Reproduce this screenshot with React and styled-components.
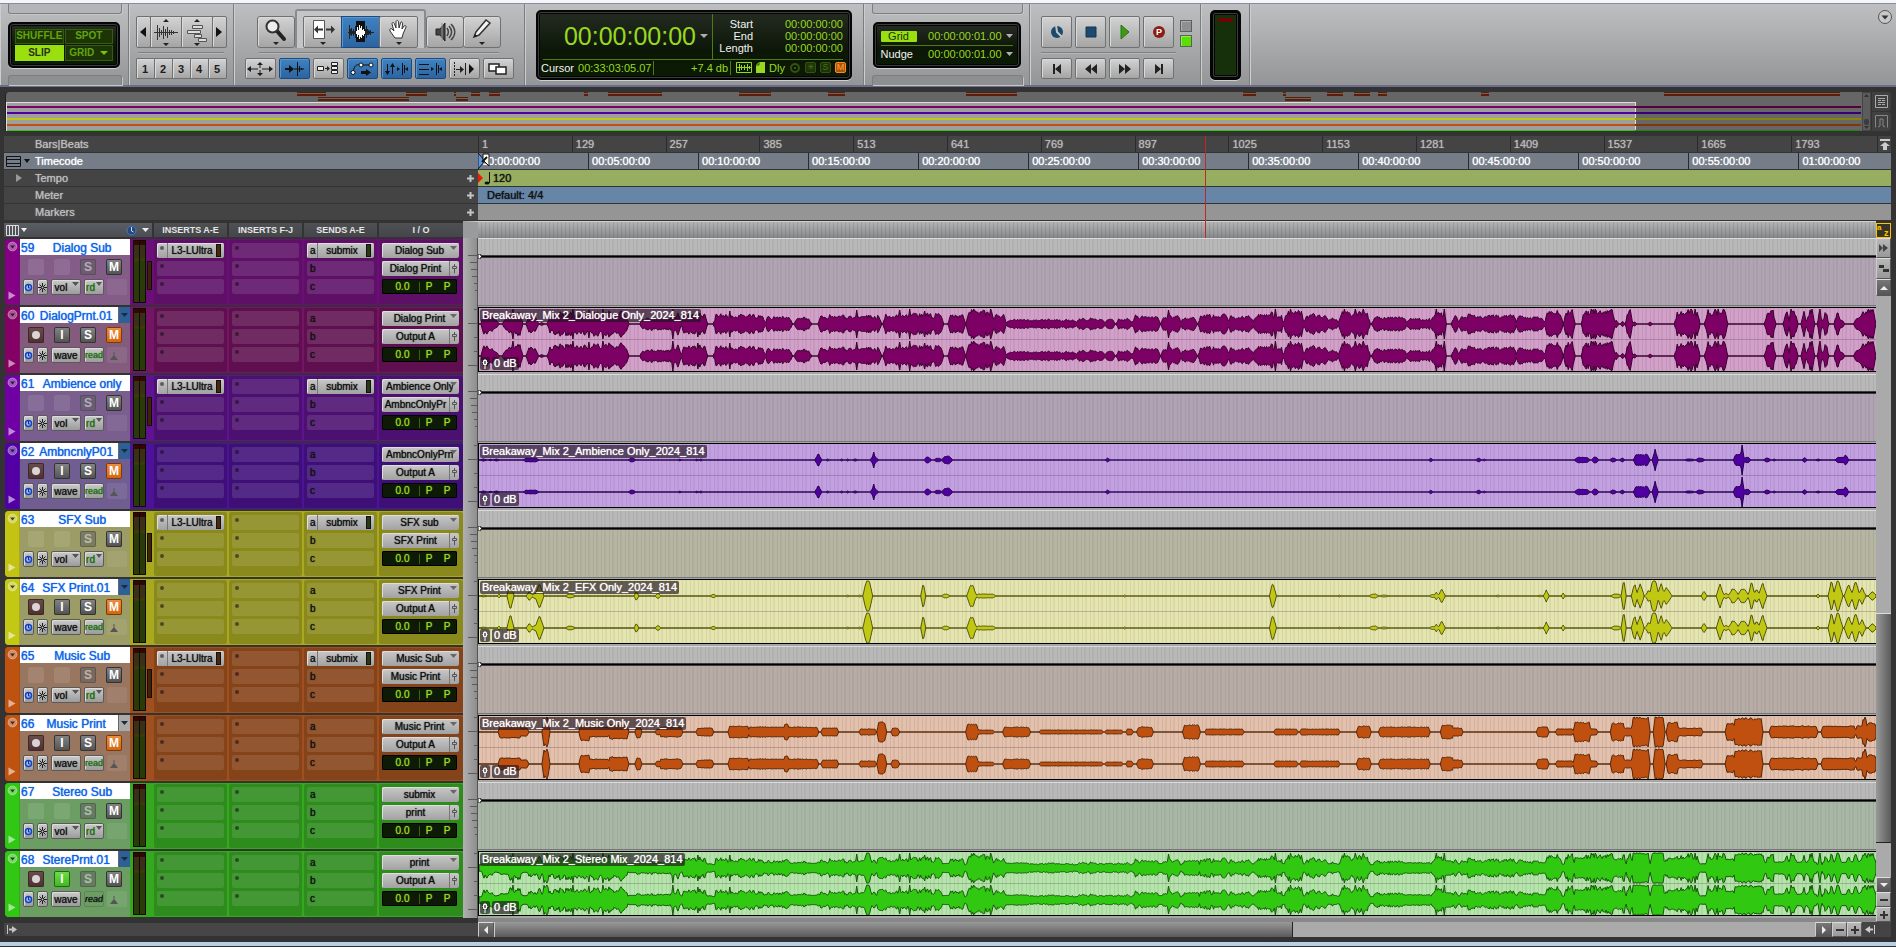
import React from 'react';
import styled, { createGlobalStyle, css } from 'styled-components';

const GlobalStyle = createGlobalStyle`
  * { box-sizing: border-box; }
  html, body { margin: 0; padding: 0; background: #303030; }
  body { font-family: "Liberation Sans", Arial, sans-serif; font-size: 11px; line-height: 12px; color: #ccc; }
  button, select { font: inherit; color: inherit; margin: 0; padding: 0; border: 0; background: none; cursor: pointer; }
  svg { display: block; flex: none; }
`;

/* ---------- data ---------- */

const DIALOG = [
  [3, 20, 14, 3], [24, 43, 6, 15], [48, 59, 9], [61, 65, 2], [69, 94, 10, 14], [94, 110, 11], [110, 149, 13], [162, 194, 7],
  [194, 202, 11], [203, 228, 11], [235, 250, 10], [250, 286, 10], [287, 313, 8], [316, 332, 7], [340, 378, 9], [378, 402, 9],
  [405, 431, 10], [431, 464, 11], [470, 486, 10], [488, 515, 15], [515, 527, 10], [528, 598, 5], [598, 626, 6], [627, 636, 5],
  [638, 653, 6], [654, 681, 9], [683, 702, 9], [702, 718, 7], [720, 750, 10], [750, 775, 8], [775, 796, 9, 13], [796, 805, 9],
  [806, 825, 14], [826, 850, 10], [850, 860, 7], [861, 891, 13], [894, 928, 8], [928, 953, 6], [953, 966, 12], [974, 980, 9],
  [981, 1038, 10], [1038, 1066, 8], [1067, 1084, 14], [1086, 1096, 15], [1104, 1136, 17], [1136, 1140, 4], [1143, 1146, 3],
  [1148, 1154, 16], [1155, 1158, 3], [1170, 1174, 2], [1197, 1221, 12, 17], [1227, 1249, 15], [1287, 1297, 16], [1306, 1311, 15],
  [1311, 1319, 16], [1324, 1328, 16], [1329, 1336, 15], [1340, 1344, 17], [1345, 1350, 15], [1357, 1362, 13], [1361, 1366, 5],
  [1376, 1385, 4, 9], [1383, 1397, 15],
];
const AMBIENCE = [
  [2, 7, 1], [10, 13, 1], [15, 20, 1], [45, 59, 2], [150, 156, 2], [200, 202, 1], [217, 219, 1], [221, 223, 1], [337, 342, 6],
  [348, 350, 1], [362, 364, 1], [368, 370, 1], [374, 379, 1], [392, 399, 3], [446, 452, 3], [456, 463, 2], [464, 473, 4],
  [627, 631, 2], [951, 954, 2], [998, 1003, 2], [1005, 1007, 1], [1097, 1111, 3], [1114, 1120, 3], [1132, 1138, 2],
  [1142, 1146, 2], [1156, 1171, 6], [1175, 1179, 11], [1207, 1216, 1], [1218, 1226, 2], [1256, 1266, 6], [1266, 1272, 3],
  [1286, 1292, 2], [1295, 1297, 1], [1325, 1328, 3], [1338, 1342, 1], [1358, 1366, 3], [1365, 1370, 5],
];
const EFX = [
  [2, 7, 1], [19, 21, 2], [29, 34, 15], [48, 53, 5], [54, 57, 3], [57, 64, 12], [87, 96, 2], [156, 159, 5], [177, 181, 3],
  [232, 237, 2], [368, 370, 1], [380, 382, 1], [385, 393, 18], [443, 446, 14], [463, 471, 2], [489, 497, 12], [497, 517, 2],
  [645, 647, 1], [792, 797, 15], [860, 862, 1], [891, 900, 2], [902, 910, 1], [952, 957, 2], [956, 960, 4], [961, 966, 8],
  [1018, 1021, 1], [1060, 1063, 1], [1066, 1070, 6], [1084, 1086, 3], [1133, 1143, 2], [1144, 1147, 18], [1154, 1159, 13],
  [1159, 1165, 14], [1167, 1173, 3, 9], [1172, 1180, 18], [1180, 1186, 13], [1185, 1193, 10, 6], [1224, 1228, 5],
  [1239, 1245, 13], [1245, 1251, 3], [1251, 1260, 7], [1260, 1270, 7], [1271, 1276, 15], [1276, 1281, 8], [1281, 1288, 13],
  [1339, 1341, 2], [1351, 1356, 16], [1356, 1364, 15], [1367, 1374, 11], [1374, 1381, 15], [1381, 1387, 9], [1391, 1398, 4],
];
const MUSIC = [
  [20, 42, 6], [41, 49, 4], [64, 70, 14], [101, 111, 9], [111, 130, 5], [130, 149, 7], [157, 162, 6], [177, 181, 3], [181, 203, 5],
  [218, 234, 4], [250, 270, 6], [270, 339, 5], [305, 310, 8], [343, 359, 4], [381, 397, 3], [399, 407, 10], [413, 420, 4],
  [488, 499, 8], [499, 515, 2], [525, 551, 5], [561, 624, 2], [627, 644, 2], [648, 654, 3], [659, 674, 5], [705, 721, 7],
  [727, 765, 3], [796, 819, 3], [822, 861, 3], [879, 892, 6], [901, 951, 5], [963, 975, 7], [975, 984, 4], [1059, 1070, 5],
  [1078, 1095, 3], [1096, 1112, 10], [1112, 1119, 3], [1133, 1146, 9], [1146, 1154, 4], [1154, 1171, 15], [1176, 1186, 16],
  [1189, 1200, 10], [1200, 1224, 4], [1248, 1256, 9], [1256, 1284, 14], [1292, 1339, 6], [1344, 1377, 6], [1378, 1384, 6],
  [1384, 1389, 13], [1389, 1398, 9],
];
const SPIKES = {
  dialog: [[34, 15], [94, 16], [110, 14], [124, 16], [194, 15], [219, 13], [251, 13], [378, 14], [421, 14], [431, 16], [446, 13], [495, 16], [505, 14], [512, 16], [690, 14], [797, 16], [812, 16], [866, 16], [877, 16], [885, 16], [958, 15], [966, 15], [1217, 16], [1240, 16]],
  ambience: [[395, 8], [1264, 16]],
  efx: [[1177, 17]],
  music: [[68, 15], [308, 8], [1170, 15], [1387, 16]],
};

const CLIP_WIDTH = 1398;

const noise = (x, seed) => {
  const v = Math.sin(x * 12.9898 + seed * 78.233) * 43758.5453;
  return v - Math.floor(v);
};

const envelope = (segments, spikes, seed, rough, taper) => {
  const out = new Array(CLIP_WIDTH + 1).fill(0);
  segments.forEach(([from, to, a, b = a]) => {
    const edge = Math.min(taper, (to - from) / 2);
    for (let x = from; x <= Math.min(to, CLIP_WIDTH); x += 1) {
      const t = (x - from) / (to - from);
      const level = a + (b - a) * t;
      const fade = Math.min(1, (x - from + 1) / (edge + 1), (to - x + 1) / (edge + 1));
      const jitter = 1.06 - rough * noise(Math.floor(x / 3), seed) * 0.6 - rough * noise(x, seed + 3);
      out[x] = Math.max(out[x], level * fade * jitter);
    }
  });
  spikes.forEach(([x, h]) => {
    out[x] = h;
    out[x - 1] = Math.max(out[x - 1], h * 0.5);
    out[x + 1] = Math.max(out[x + 1], h * 0.5);
  });
  return out;
};

const levels = {
  dialog: envelope(DIALOG, SPIKES.dialog, 1, 0.36, 2),
  ambience: envelope(AMBIENCE, SPIKES.ambience, 2, 0.2, 2),
  efx: envelope(EFX, SPIKES.efx, 3, 0.16, 3),
  music: envelope(MUSIC, SPIKES.music, 4, 0.14, 1),
};
levels.stereo = levels.dialog.map((v, x) => {
  const quiet = 3 + 2 * noise(Math.floor(x / 3), 7);
  return Math.max(v, levels.ambience[x], levels.efx[x], levels.music[x] * 1.05, quiet);
});

const wavePath = (values, mid) => {
  let top = `M0 ${mid}`;
  let bottom = '';
  values.forEach((v, x) => {
    const h = Math.min(15, v);
    top += `L${x} ${(mid - h).toFixed(1)}`;
    bottom = `L${x} ${(mid + h).toFixed(1)}` + bottom;
  });
  return `${top}${bottom}Z`;
};

const hues = {
  purple: { strip: '#850085', frame: '#6a0f78', panel: '#5d1066', slot: '#6e2977', info: '#835c88', tint: '#b1a5b3' },
  plum: { strip: '#840064', frame: '#741464', panel: '#5f0f4f', slot: '#702b62', info: '#835c7d', clip: '#d2a0c8', wave: '#7d0064', line: '#37002c' },
  violet: { strip: '#7000a4', frame: '#5f1390', panel: '#4c1170', slot: '#602a80', info: '#795e8e', tint: '#b0a3b4' },
  indigo: { strip: '#5200a6', frame: '#4c1398', panel: '#3f0f78', slot: '#532a88', info: '#705e92', clip: '#c3a0e1', wave: '#5000a0', line: '#24004c' },
  yellow: { strip: '#c3c314', frame: '#a9a920', panel: '#8a8a1c', slot: '#969634', info: '#9c9c66', tint: '#b6b6a3' },
  lime: { strip: '#c3c814', frame: '#a9a920', panel: '#8a8a1c', slot: '#969634', info: '#9c9c66', clip: '#e5e5b0', wave: '#c1c814', line: '#50520a' },
  orange: { strip: '#c05210', frame: '#a0501e', panel: '#85431a', slot: '#925631', info: '#987660', tint: '#b8aca7' },
  rust: { strip: '#c05210', frame: '#a0501e', panel: '#85431a', slot: '#925631', info: '#987660', clip: '#e3c1ac', wave: '#c05010', line: '#552506' },
  green: { strip: '#30c812', frame: '#36a820', panel: '#2d8c1c', slot: '#439835', info: '#6c9e64', tint: '#a9b8a6' },
  leaf: { strip: '#30c812', frame: '#36a820', panel: '#2d8c1c', slot: '#439835', info: '#6c9e64', clip: '#b5e5ab', wave: '#30c810', line: '#15560a' },
};

const tracks = [
  { no: 59, name: 'Dialog Sub', hue: 'purple', insert: 'L3-LUltra', send: 'submix', input: 'Dialog Sub', output: 'Dialog Print' },
  { no: 60, name: 'DialogPrnt.01', hue: 'plum', playlist: 'blue', input: 'Dialog Print', output: 'Output A', clip: 'Breakaway_Mix 2_Dialogue Only_2024_814', wave: 'dialog', muted: true },
  { no: 61, name: 'Ambience only', hue: 'violet', insert: 'L3-LUltra', send: 'submix', input: 'Ambience Only', output: 'AmbncOnlyPr' },
  { no: 62, name: 'AmbncnlyP01', hue: 'indigo', playlist: 'blue', input: 'AmbncOnlyPrn', output: 'Output A', clip: 'Breakaway_Mix 2_Ambience Only_2024_814', wave: 'ambience', muted: true },
  { no: 63, name: 'SFX Sub', hue: 'yellow', insert: 'L3-LUltra', send: 'submix', input: 'SFX sub', output: 'SFX Print' },
  { no: 64, name: 'SFX Print.01', hue: 'lime', playlist: 'blue', input: 'SFX Print', output: 'Output A', clip: 'Breakaway_Mix 2_EFX Only_2024_814', wave: 'efx', muted: true },
  { no: 65, name: 'Music Sub', hue: 'orange', insert: 'L3-LUltra', send: 'submix', input: 'Music Sub', output: 'Music Print' },
  { no: 66, name: 'Music Print', hue: 'rust', playlist: 'grey', input: 'Music Print', output: 'Output A', clip: 'Breakaway_Mix 2_Music Only_2024_814', wave: 'music', muted: true },
  { no: 67, name: 'Stereo Sub', hue: 'green', input: 'submix', output: 'print' },
  { no: 68, name: 'SterePrnt.01', hue: 'leaf', playlist: 'blue', input: 'print', output: 'Output A', clip: 'Breakaway_Mix 2_Stereo Mix_2024_814', wave: 'stereo', monitor: true },
];

/* ---------- toolbar ---------- */

const TopEdge = styled.div`height: 3px; background: #f4f5f7;`;

const Toolbar = styled.header`
  display: flex;
  height: 84px;
  border-top: 1px solid #878ba8;
  border-bottom: 2px solid #6c6c8c;
  background: linear-gradient(#bebfc0, #949597);
`;
const Section = styled.section`
  display: flex;
  flex-direction: column;
  align-items: ${p => p.$align || 'center'};
  justify-content: ${p => p.$justify || 'flex-start'};
  flex: none;
  width: ${p => p.$w}px;
  padding: ${p => p.$pad || '0'};
  border-right: 1px solid #7c7d7f;
  box-shadow: inset 1px 0 #cccdce;
`;
const LastSection = styled(Section)`
  flex: 1;
  width: auto;
  border-right: 0;
`;
const Bracket = styled.div`
  align-self: stretch;
  height: 10px;
  margin: 0 6px 0 8px;
  border: 1px solid #7d7e80;
  box-shadow: 1px 1px #c6c7c8;
  ${p => p.$top
    ? css`border-top: 0; border-radius: 0 0 3px 3px; background: #b4b5b6;`
    : css`border-bottom: 0; border-radius: 3px 3px 0 0; background: #8e8f91;`}
`;
const Lcd = styled.div`
  background: linear-gradient(#232b20, #0c1607 60%, #0a1a04);
  border: 4px solid #050505;
  outline: 1px solid #3c3d3e;
  outline-offset: -3px;
  border-radius: 5px;
  box-shadow: 0 1px #d0d0d0;
  color: #98d820;
`;
const ModeLcd = styled(Lcd)`
  display: grid;
  grid-template-columns: 1fr 1fr;
  gap: 1px;
  width: 112px;
  height: 46px;
  padding: 3px;
`;
const ModeButton = styled.button`
  display: flex;
  align-items: center;
  justify-content: center;
  gap: 6px;
  border: 1px solid #355b0e;
  background: #1d3506;
  color: #62a40c;
  font-size: 10px;
  font-weight: bold;
  line-height: 12px;
  ${p => p.$on && css`background: #9ae00f; border-color: #9ae00f; color: #2a2f20;`}
`;
const ButtonRow = styled.div`
  display: flex;
  align-items: ${p => p.$align || 'stretch'};
  gap: ${p => p.$gap || 0}px;
  height: ${p => p.$h}px;
`;
const Rule = styled.div`
  width: ${p => p.$w}px;
  height: 2px;
  margin: 4px 0;
  background: #808183;
  border-bottom: 1px solid #b5b6b7;
`;
const Key = styled.button`
  display: flex;
  align-items: center;
  justify-content: center;
  width: ${p => p.$w}px;
  height: ${p => p.$h || 32}px;
  border: 1px solid #6f7072;
  border-radius: ${p => p.$r ?? 3}px;
  box-shadow: inset 1px 1px #dadada;
  background: linear-gradient(#d3d3d3, #a5a5a5);
  color: #1c1c1c;
  font-size: 11px;
  font-weight: bold;
  ${p => p.$on && css`
    background: linear-gradient(#3f82c0, #2c64a0);
    border-color: #1c4a80;
    box-shadow: inset 1px 1px #5a96cc;
  `}
  & + & { ${p => p.$joined && css`margin-left: -1px;`} }
`;
const Raised = styled.div`
  display: flex;
  align-items: flex-end;
  height: 39px;
  padding: 0 6px;
  border: 2px solid #8a8b8d;
  border-bottom: 0;
  border-radius: 3px 3px 0 0;
  background: #c4c5c6;
`;

const CounterLcd = styled(Lcd)`
  display: grid;
  grid-template-rows: 46px 1fr;
  width: 316px;
  height: 70px;
`;
const CounterTop = styled.div`
  display: flex;
  margin: 0 5px 0 3px;
  border-bottom: 1px solid #4d7d10;
`;
const MainTime = styled.div`
  display: flex;
  align-items: center;
  justify-content: flex-end;
  gap: 4px;
  width: 170px;
  padding-right: 4px;
  border-right: 1px solid #4d7d10;
  font-size: 25px;
  line-height: 28px;
`;
const Selection = styled.dl`
  flex: 1;
  display: grid;
  grid-template-columns: 40px 1fr;
  grid-auto-rows: 12px;
  align-content: center;
  margin: 0;
  text-align: right;
  dt { color: #f2f2f2; }
  dd { margin: 0; }
`;
const CounterBottom = styled.div`
  display: flex;
  align-items: center;
  padding: 0 2px 0 1px;
  line-height: 14px;
`;
const White = styled.span`color: #f2f2f2;`;
const CursorTime = styled.span`
  margin-left: 4px;
  padding-right: 2px;
  border-right: 1px solid #4d7d10;
`;
const Gain = styled.span`
  margin-left: auto;
  padding-right: 2px;
  margin-right: 5px;
  border-right: 1px solid #4d7d10;
`;
const Lamps = styled.span`display: flex; align-items: center; gap: 4px;`;
const Lamp = styled.span`
  width: 11px;
  height: 11px;
  border: 1px solid ${p => (p.$on ? '#ff8a1c' : '#35520f')};
  border-radius: 2px;
  background: ${p => (p.$on ? '#a85408' : '#1d3209')};
  color: ${p => (p.$on ? '#ffa040' : '#48701a')};
  font-size: 9px;
  line-height: 9px;
  text-align: center;
`;
const GridLcd = styled(Lcd)`
  width: 148px;
  height: 46px;
  padding: 2px 4px;
`;
const GridRow = styled.div`
  display: flex;
  align-items: center;
  height: 17px;
  gap: 4px;
  & + & { border-top: 1px solid #4d7d10; }
  time { margin-left: auto; }
`;
const GridToggle = styled.button`
  width: 36px;
  height: 11px;
  border-radius: 1px;
  background: #98e010;
  color: #1c3008;
  line-height: 11px;
`;
const Led = styled.span`
  width: 12px;
  height: 12px;
  border: 1px solid #5c5d5e;
  background: ${p => (p.$on ? '#5ae000' : '#8f9091')};
  box-shadow: inset 1px 1px ${p => (p.$on ? '#8cf050' : '#b0b0b0')};
`;
const Leds = styled.div`display: flex; flex-direction: column; justify-content: center; gap: 3px; margin-left: 2px; padding-top: 3px;`;
const MeterLcd = styled(Lcd)`
  width: 31px;
  height: 70px;
  padding: 3px;
  border-width: 5px;
  outline-offset: -4px;
  background: #16300c;
  &::before { content: ''; display: block; height: 4px; background: #6a0606; }
`;
const CornerButton = styled.button`margin: 5px 3px 0 auto;`;

/* ---------- overview ---------- */

const Workspace = styled.main`padding: 5px 5px 5px 4px; background: #333;`;

const Universe = styled.div`display: flex; height: 39px; margin-bottom: 5px; padding-left: 1px;`;
const UniverseMap = styled.div`
  position: relative;
  flex: 1;
  overflow: hidden;
  border-left: 1px solid #222;
  border-radius: 4px 0 0 0;
  background: #666;
`;
const MapFrame = styled.div`
  position: absolute;
  left: 0;
  top: 10px;
  width: ${p => p.$share}%;
  height: 29px;
  border: 1px solid #ddd;
  border-bottom: 0;
  background: #9e9e9e;
`;
const MapClip = styled.div`
  position: absolute;
  top: ${p => p.$row * 5}px;
  height: 4px;
  background: linear-gradient(#5c1e08 0 1px, #666 1px 2px, #5c1e08 2px);
`;
const MapTrack = styled.div`
  position: absolute;
  left: 1px;
  right: 1px;
  top: ${p => p.$y}px;
  height: 2px;
  background: linear-gradient(90deg, ${p => p.$c} ${p => p.$share}%, ${p => p.$dim} ${p => p.$share}%);
`;
const UniverseScroll = styled.div`
  display: flex;
  flex-direction: column;
  justify-content: space-between;
  align-items: center;
  width: 9px;
  padding: 1px 0;
  border: 1px solid #444;
  background: #5c5c5c;
`;
const UniverseKnob = styled.i`width: 5px; height: 6px; margin: auto 0 1px; border-radius: 2px; background: #3c3c3c;`;
const UniverseButtons = styled.div`
  display: flex;
  flex-direction: column;
  gap: 1px;
  width: 20px;
  padding-left: 1px;
  button { height: 20px; display: grid; place-items: center; background: #404040; border-radius: 0 3px 3px 0; }
`;

/* ---------- rulers ---------- */

const Rulers = styled.div`position: relative; display: flex; flex-direction: column; gap: 1px; margin-bottom: 1px;`;
const RulerRow = styled.div`display: flex; height: 16px; background: ${p => p.$bg || '#444'};`;
const RulerName = styled.div`
  display: flex;
  align-items: center;
  width: 474px;
  padding-left: ${p => (p.$lead ? 2 : 31)}px;
  padding-right: 4px;
  background: ${p => p.$bg || '#444'};
  color: ${p => p.$color || '#bdbdbd'};
  text-shadow: 0 0 1px currentColor;
  > svg:last-child { margin-left: auto; }
`;
const RulerLead = styled.span`display: flex; align-items: center; gap: 3px; width: 29px; padding-left: ${p => (p.$indent ? 10 : 0)}px;`;
const RulerBody = styled.div`
  flex: 1;
  min-width: 0;
  display: flex;
  align-items: center;
  overflow: hidden;
  color: ${p => p.$color || '#111'};
  background: ${p => p.$bg || 'transparent'};
  text-shadow: 0 0 1px currentColor;
`;
const Tick = styled.span`
  flex: none;
  height: 16px;
  padding-left: 3px;
  border-left: 1px solid #2b2b2b;
  line-height: 16px;
`;
const Ticks = styled.div`display: flex; width: 100%; flex: none;`;
const ToTop = styled.button`display: grid; place-items: center; width: 14px; height: 16px; border-left: 1px solid #2b2b2b;`;
const TempoText = styled.span`padding-left: 2px;`;
const MeterText = styled.span`padding-left: 9px;`;
const Playhead = styled.i`
  position: absolute;
  top: 0;
  left: 1201px;
  width: 1px;
  height: 102px;
  background: #c22626;
  z-index: 2;
`;
const StartFlag = styled.svg`position: relative; z-index: 1; margin-right: -12px;`;

/* ---------- edit window ---------- */

const Body = styled.div`display: flex;`;
const TrackArea = styled.div`flex: 1; min-width: 0;`;
const ColumnHeads = styled.div`display: flex; height: 17px; align-items: stretch;`;
const HeadList = styled.div`
  display: grid;
  grid-template-columns: 148px 73px 73px 73px 84px;
  gap: 2px;
  width: 459px;
  padding: 2px 0 1px;
`;
const Head = styled.div`
  display: flex;
  align-items: center;
  justify-content: center;
  background: linear-gradient(#4f5052, #45464a);
  color: #e6e6e6;
  font-size: 9px;
  font-weight: bold;
`;
const HeadTools = styled(Head)`
  justify-content: flex-start;
  gap: 2px;
  padding: 0 3px 0 2px;
  background: linear-gradient(#5a5e64, #4a4d52);
  svg:nth-child(3) { margin: 0 3px 0 auto; }
`;
const stripes = css`
  background-image: repeating-linear-gradient(90deg, transparent 0 3px, rgba(0, 0, 0, 0.07) 3px 4px, transparent 4px 6px, rgba(0, 0, 0, 0.05) 6px 8px);
`;
const HeadLane = styled.div`
  flex: 1;
  border-left: 15px solid #9a9b9c;
  border-top: 1px solid #cfcfcf;
  background: repeating-linear-gradient(90deg, transparent 0 3px, rgba(0, 0, 0, 0.1) 3px 4px), linear-gradient(#b5b5b5, #858789);
`;

const Row = styled.div`display: flex; height: 68px;`;
const TrackHead = styled.div`
  display: grid;
  grid-template-columns: 14px 111px 24px 75px 75px 75px 84px;
  width: 458px;
  height: 66px;
  margin: 1px 0 1px 1px;
  border-radius: 4px 0 0 4px;
  overflow: hidden;
  background: ${p => p.$h.frame};
`;
const ColorStrip = styled.div`
  display: flex;
  flex-direction: column;
  justify-content: space-between;
  align-items: center;
  padding: 2px 0 5px;
  background: ${p => p.$h.strip};
  button { display: block; }
`;
const Info = styled.div`
  margin-left: 1px;
  background: ${p => p.$h.info};
`;
const NameRow = styled.div`display: flex; height: 16px; background: #fff; color: #0f62e6;`;
const TrackNo = styled.span`padding-left: 1px; font-size: 12px; line-height: 18px; text-shadow: 0 0 1px currentColor;`;
const TrackName = styled.button`
  flex: 1;
  min-width: 0;
  font-size: 12px;
  line-height: 18px;
  text-shadow: 0 0 1px currentColor;
  white-space: nowrap;
`;
const Playlist = styled.button`
  width: 12px;
  padding-left: 2px;
  border-left: 1px solid #666;
  background: ${p => (p.$kind === 'blue' ? '#2d6098' : '#aaa')};
  display: flex;
  align-items: center;
`;
const Pads = styled.div`display: flex; gap: 10px; padding: 4px 8px 0;`;
const Pad = styled.button`
  display: grid;
  place-items: center;
  width: 16px;
  height: 16px;
  border-radius: 2px;
  font-size: 12px;
  font-weight: bold;
  line-height: 14px;
  color: #fff;
  ${p => ({
    blank: css`background: rgba(255, 255, 255, 0.1);`,
    rec: css`background: linear-gradient(#6a4e4e, #4c2f2f); box-shadow: inset 0 0 0 1px #402828;`,
    grey: css`background: linear-gradient(#868686, #505050); box-shadow: inset 0 0 0 1px #333;`,
    dim: css`background: rgba(90, 90, 90, 0.5); box-shadow: inset 0 0 0 1px rgba(60, 60, 60, 0.4); color: rgba(255, 255, 255, 0.5);`,
    mute: css`background: linear-gradient(#f09040, #cf6410); box-shadow: inset 0 0 0 1px #7c3a08;`,
    input: css`background: linear-gradient(#70e048, #40b420); box-shadow: inset 0 0 0 1px #1f6a10;`,
  })[p.$kind]}
`;
const Modes = styled.div`display: flex; gap: 3px; padding: 4px 3px 0;`;
const chip = css`
  height: 16px;
  border-radius: 2px;
  border: 1px solid #5a5a5a;
  background: linear-gradient(#cacaca, #9c9c9c);
  box-shadow: inset 1px 1px #dcdcdc;
  color: #111;
`;
const SmallKey = styled.button`
  ${chip}
  display: grid;
  place-items: center;
  width: 11px;
`;
const ModeSelect = styled.select`
  ${chip}
  appearance: none;
  width: ${p => p.$w}px;
  padding: 0 ${p => (p.$arrow ? Math.round(p.$w / 3) : 0)}px 0 0;
  text-align: center;
  text-align-last: center;
  font-size: 10px;
  line-height: 13px;
  text-shadow: 0 0 1px currentColor;
  color: ${p => p.$color || '#111'};
  ${p => p.$tight && css`font-size: 9px;`}
  ${p => p.$flat && css`background: transparent; border-color: rgba(0, 0, 0, 0.15); box-shadow: none; font-style: italic;`}
`;
const SelectWrap = styled.span`
  position: relative;
  display: flex;
  svg { position: absolute; right: 2px; top: 3px; pointer-events: none; }
`;
const BlankMode = styled.span`
  display: grid;
  place-items: end start;
  width: 22px;
  height: 16px;
  padding: 3px;
  border-radius: 2px;
  background: rgba(255, 255, 255, 0.08);
`;
const MeterCell = styled.div`display: flex; align-items: flex-start; gap: 1px; padding: 1px 0 0 3px;`;
const TrackMeter = styled.div`
  width: 13px;
  height: 63px;
  border: 1px solid #0c0c04;
  background:
    linear-gradient(90deg, transparent 5px, #0c0c04 5px 6px, transparent 6px),
    linear-gradient(#3a0404 0 4px, #3a3018 4px 17px, #3c3c06 17px 20px, #2a3a08 20px);
`;
const SideMeter = styled.div`width: 5px; height: 29px; margin-top: 21px; border: 1px solid #140c04; background: #3d2408;`;
const Slots = styled.div`
  display: flex;
  flex-direction: column;
  gap: 3px;
  height: 64px;
  margin: 1px 2px 1px 0;
  padding: 3px 3px 0;
  border-radius: 2px;
  background: ${p => p.$h.panel};
  color: #111;
`;
const IoSlots = styled(Slots)`margin-right: 0; padding-right: 4px;`;
const Slot = styled.button`
  display: flex;
  align-items: center;
  height: 15px;
  border-radius: 2px;
  background: ${p => p.$h.slot};
  font-size: 10px;
  text-align: left;
  ${p => p.$on && css`background: linear-gradient(#c8c8c8, #a2a2a2); box-shadow: inset 1px 1px #dedede;`}
`;
const SlotKey = styled.span`
  width: 11px;
  padding-left: 3px;
  align-self: stretch;
  line-height: 15px;
  text-shadow: 0 0 1px currentColor;
  border-right: ${p => (p.$on ? '1px solid #777' : '0')};
`;
const Dot = styled.i`display: block; width: 4px; height: 4px; margin-top: 3px; border-radius: 2px; background: rgba(20, 10, 20, 0.55);`;
const SlotText = styled.span`flex: 1; text-align: center; text-shadow: 0 0 1px currentColor;`;
const SlotMeter = styled.i`width: 5px; height: 13px; margin-right: 3px; border: 1px solid #111; background: ${p => p.$c};`;
const IoSelect = styled.select`
  appearance: none;
  width: 77px;
  height: 15px;
  padding: 0 6px 0 4px;
  border-radius: 2px;
  background: linear-gradient(#c8c8c8, #a2a2a2);
  box-shadow: inset 1px 1px #dedede;
  color: #111;
  font-size: 10px;
  line-height: 13px;
  text-align: center;
  text-align-last: center;
  text-shadow: 0 0 1px currentColor;
`;
const IoOutput = styled.span`
  display: flex;
  ${IoSelect} { width: 67px; padding: 0; border-radius: 2px 0 0 2px; }
`;
const FaderKey = styled.button`
  display: grid;
  place-items: center;
  width: 10px;
  height: 15px;
  border-left: 1px solid #777;
  border-radius: 0 2px 2px 0;
  background: linear-gradient(#c8c8c8, #a2a2a2);
`;
const VolPan = styled.div`
  display: flex;
  align-items: center;
  width: 75px;
  height: 15px;
  border-radius: 2px;
  background: #0d1a06;
  box-shadow: inset 0 0 0 1px #000;
  color: #98d820;
  font-size: 10px;
  text-shadow: 0 0 1px currentColor;
  span { width: 18px; text-align: center; }
  span:first-child { width: 38px; border-right: 1px solid #3c6010; padding-left: 4px; line-height: 10px; }
`;

const Scale = styled.div`
  width: 15px;
  background: linear-gradient(90deg, #b0b0b0, #8e8e8e);
  border-right: 1px solid #555;
  display: flex;
  flex-direction: column;
  align-items: flex-end;
  padding-top: ${p => (p.$clip ? 3 : 17)}px;
  gap: ${p => (p.$clip ? 13 : 6)}px;
`;
const ScaleMark = styled.i`width: ${p => p.$w}px; height: 1px; background: #5a5a5a;`;
const AuxLane = styled.div`
  flex: 1;
  min-width: 0;
  height: 68px;
  border-top: 1px solid #dadada;
  border-bottom: 1px solid #777;
  background-color: #b9b9b9;
  ${stripes}
`;
const AutoFill = styled.div`
  height: 49px;
  margin-top: 17px;
  border-top: 1px solid #000;
  box-shadow: 0 -1px #3c3c3c, inset 0 1px #3c3c3c;
  background-color: ${p => p.$c};
  ${stripes}
`;
const AutoPoint = styled.svg`position: relative; top: -3px;`;
const ClipLane = styled.div`
  flex: 1;
  min-width: 0;
  height: 68px;
  padding: 1px 0 2px;
  background: #a6a6a6;
`;
const Clip = styled.div`
  position: relative;
  height: 65px;
  border: 1px solid #000;
  border-right: 0;
  background-color: ${p => p.$c};
  ${stripes}
`;
const Wave = styled.svg`width: 100%; height: 63px;`;
const ClipName = styled.span`
  position: absolute;
  left: 1px;
  top: 1px;
  padding: 0 2px;
  border-radius: 2px;
  background: rgba(30, 20, 30, 0.66);
  color: #fff;
  line-height: 13px;
  text-shadow: 0 0 1px currentColor;
`;
const ClipGain = styled.span`
  position: absolute;
  left: 1px;
  bottom: 1px;
  display: flex;
  gap: 2px;
  color: #fff;
  line-height: 13px;
  text-shadow: 0 0 1px currentColor;
  > * { padding: 0 2px; border-radius: 2px; background: rgba(30, 20, 30, 0.66); }
  svg { padding: 0; }
`;
const BottomGap = styled.div`height: 4px; margin-left: 474px; background: #888;`;

const ScrollColumn = styled.div`
  display: flex;
  flex-direction: column;
  width: 15px;
  margin-top: 2px;
  background: #aaa;
`;
const ToolKey = styled.button`
  height: ${p => p.$h || 15}px;
  width: ${p => p.$w || 15}px;
  display: grid;
  place-items: center;
  border: 1px solid #555;
  border-top-color: #ddd;
  border-left-color: #ccc;
  background: ${p => (p.$dark ? 'linear-gradient(#777, #555)' : 'linear-gradient(#b8b8b8, #999)')};
`;
const AzKey = styled.button`
  display: grid;
  place-items: center;
  width: 15px;
  height: 15px;
  border: 1px solid #ffc400;
  background: #3a3426;
`;
const VTrack = styled.div`flex: 1; display: flex; flex-direction: column;`;
const VSpace = styled.div`flex: ${p => p.$f};`;
const VThumb = styled.div`
  flex: 229;
  border-top: 1px solid #ddd;
  border-bottom: 1px solid #222;
  background: linear-gradient(90deg, #999, #5a5a5a);
`;

const BottomBar = styled.div`display: flex; height: 15px;`;
const BottomLeft = styled.div`
  display: flex;
  align-items: center;
  width: 474px;
  padding-left: 3px;
  margin: 1px 0;
  background: #464646;
  border-radius: 0 0 0 3px;
`;
const HScroll = styled.div`flex: 1; display: flex; background: #aaa;`;
const HTrack = styled.div`flex: 1; display: flex;`;
const HThumb = styled.div`width: 60.5%; border-left: 1px solid #ccc; border-right: 1px solid #222; background: linear-gradient(#999, #5a5a5a);`;
const BottomEnd = styled.div`display: flex; align-items: center; justify-content: flex-start; width: 29px; padding-left: 3px; background: #444;`;
const DesktopEdge = styled.div`height: 4px; background: #b8cfea;`;

/* ---------- icons ---------- */

const Down = ({ c = '#222', w = 8, h = 4 }) => (
  <svg width={w} height={h} viewBox="0 0 8 4" preserveAspectRatio="none"><path d="M0 0H8L4 4Z" fill={c} /></svg>
);
const Glyph = ({ w = 20, h = 20, children }) => (
  <svg width={w} height={h} viewBox={`0 0 ${w} ${h}`}>{children}</svg>
);
const carets = <path d="M9 3l3-3 3 3zM9 24h6l-3 3z" fill="#222" />;

const icons = {
  left: <Glyph w={6} h={10}><path d="M6 0v10L0 5z" fill="#111" /></Glyph>,
  right: <Glyph w={6} h={10}><path d="M0 0v10l6-5z" fill="#111" /></Glyph>,
  waveZoom: (
    <Glyph w={24} h={27}>
      {carets}
      <path d="M0 13.500h2M22 13.500h2M3.500 6v15M5.500 9v9M7.500 11v5M9.500 7v13M11.500 10v7M13.500 8v11M15.500 11v5M17.500 11v5M19.500 12v3M21.500 13v1" stroke="#333" />
      <path d="M1 13.500h22" stroke="#333" />
    </Glyph>
  ),
  midiZoom: (
    <Glyph w={24} h={27}>
      {carets}
      <path d="M7.500 6.500h10v3h-10zM2.500 11.500h13v3h-13zM9.500 15.500h7v3h-7zM13.500 19.500h8v3h-8z" fill="#ddd" stroke="#555" />
    </Glyph>
  ),
  magnifier: (
    <Glyph w={26} h={27}>
      <path d="M14 12l7 8" stroke="#222" strokeWidth="4" strokeLinecap="round" />
      <circle cx="9.500" cy="7.500" r="6" fill="#eee" stroke="#333" strokeWidth="2" />
      <path d="M10 23h6l-3 3z" fill="#222" />
    </Glyph>
  ),
  trim: (
    <Glyph w={26} h={27}>
      <path d="M3.500 1.500h11v18h-11z" fill="#fff" stroke="#555" />
      <path d="M4 10.500l4-4v3h5v2H8v3zM25 10.500l-4-4v3h-5v2h5v3z" fill="#333" />
      <path d="M10 23h6l-3 3z" fill="#222" />
    </Glyph>
  ),
  selector: (
    <Glyph w={26} h={24}>
      <path d="M8 1h9v21H8z" fill="#111" />
      <path d="M1.500 5v14M2.500 9v6M3.500 8v8M4.500 11v3M5.500 9v7M6.500 11v3M7.500 6v12M17.500 9v6M18.500 6v12M19.500 9v6M20.500 10v5M21.500 11v3M22.500 10v5M24.500 12v1M0 12.500h26" stroke="#222" />
      <path d="M8.500 11v3M9.500 7v10M10.500 10v5M11.500 5v14M12.500 8v9M13.500 6v12M14.500 10v5M15.500 9v7M16.500 11v3" stroke="#fff" />
    </Glyph>
  ),
  hand: (
    <Glyph w={26} h={27}>
      <path d="M9 19l-5-7c-1-2 1-3 2-2l2 2-2-7c0-2 2-2 2.500 0l1.500 4V3c0-2 2.500-2 2.500 0l.5 6 1.500-5c.5-2 2.500-1 2 1l-.500 5 2-3c1-1 2.500 0 2 1l-3 7-1 4z" fill="#fff" stroke="#333" />
      <path d="M10 23h6l-3 3z" fill="#222" />
    </Glyph>
  ),
  speaker: (
    <Glyph w={22} h={22}>
      <path d="M2 8h4l5-6v18l-5-6H2z" fill="#444" stroke="#222" />
      <path d="M8 2v18" stroke="#999" />
      <path d="M13 7c2 3 2 5 0 8M15 5c3.500 4 3.500 8 0 12M17 3c5 5 5 11 0 16" fill="none" stroke="#444" strokeWidth="1.500" />
    </Glyph>
  ),
  pencil: (
    <Glyph w={26} h={27}>
      <path d="M5 18l2-5L17 1l4 3-11 12z" fill="#f4f4f4" stroke="#333" strokeWidth="1.500" />
      <path d="M5 18l1-3 2 2z" fill="#111" />
      <path d="M10 23h6l-3 3z" fill="#222" />
    </Glyph>
  ),
  zoomToggle: <Glyph w={26} h={14}><path d="M0 7l4-3v6zM26 7l-4-3v6zM13 0l3 3h-6zM13 14l3-3h-6zM4 6.500h7v1H4zM15 6.500h7v1h-7zM12.500 3h1v3h-1zM12.500 8h1v3h-1z" fill="#1c1c1c" /></Glyph>,
  transient: <Glyph w={20} h={14}><path d="M1 6h4V3l5 4-5 4V8H1z" fill="#111" /><path d="M10 7h10M13.500 0v14M15.500 4v6M17.500 6v2" stroke="#111" /></Glyph>,
  mirror: <Glyph w={22} h={13}><path d="M.500 4.500h6v4h-6zM14.500 .500h6v3h-6zM14.500 4.500h6v3h-6zM14.500 8.500h6v3h-6z" fill="#eee" stroke="#222" /><path d="M8 6.500h3" stroke="#222" /><path d="M10 4l3 2.500L10 9z" fill="#222" /></Glyph>,
  linkAuto: <Glyph w={24} h={14}><path d="M3 10C5 1 8 3 10 3h11" fill="none" stroke="#111" /><circle cx="3" cy="10.500" r="2" fill="#fff" stroke="#111" /><circle cx="11" cy="3" r="2" fill="#fff" stroke="#111" /><circle cx="21" cy="3" r="2" fill="#fff" stroke="#111" /><path d="M11 9h5V7l5 3.500-5 3.500v-2h-5z" fill="#111" /></Glyph>,
  linkTrack: <Glyph w={23} h={14}><path d="M2.500 2v10M7.500 12V2M17.500 1v12M19.500 3v8" stroke="#111" fill="none" /><path d="M0 9h5l-2.500 4zM5 5h5L7.500 1zM12 5l3 2-3 2zM23 5l-3 2 3 2z" fill="#111" /></Glyph>,
  linkEdit: <Glyph w={23} h={14}><path d="M0 2.500h10M0 7.500h10M0 12.500h10M17.500 1v12M19.500 3v8" stroke="#111" /><path d="M12 5l3 2-3 2zM23 5l-3 2 3 2z" fill="#111" /></Glyph>,
  insertion: <Glyph w={22} h={14}><path d="M1.500 0v14" stroke="#222" strokeDasharray="2 1" /><path d="M3 7.500h5" stroke="#222" /><path d="M7 4l4 3.500L7 11z" fill="#222" /><path d="M12.500 1v12" stroke="#222" /><path d="M16 2v10l5-5z" fill="#111" /></Glyph>,
  layered: <Glyph w={20} h={12}><path d="M1 1h10v7H1z" fill="#fff" stroke="#222" strokeWidth="1.500" /><path d="M8 4h10v7H8z" fill="#fff" stroke="#222" strokeWidth="1.500" /></Glyph>,
  online: <Glyph w={14} h={14}><circle cx="7" cy="7" r="6" fill="#1d4a6c" /><path d="M6 0l1 7 5 5" stroke="#c4c4c4" strokeWidth="2" fill="none" /></Glyph>,
  stop: <Glyph w={12} h={12}><path d="M1 1h10v10H1z" fill="#1d4a70" stroke="#15354f" /></Glyph>,
  play: <Glyph w={10} h={16}><path d="M1 1l8 7-8 7z" fill="#3a9c14" stroke="#2a7410" /></Glyph>,
  rtz: <Glyph w={10} h={10}><path d="M1 0h2v10H1zM9 0v10L3 5z" fill="#222" /></Glyph>,
  rewind: <Glyph w={12} h={10}><path d="M6 0v10L0 5zM12 0v10L6 5z" fill="#222" /></Glyph>,
  forward: <Glyph w={12} h={10}><path d="M0 0v10l6-5zM6 0v10l6-5z" fill="#222" /></Glyph>,
  toEnd: <Glyph w={10} h={10}><path d="M7 0h2v10H7zM1 0v10l6-5z" fill="#222" /></Glyph>,
  plus: <Glyph w={7} h={7}><path d="M0 3.500h7M3.500 0v7" stroke="#c4c4c4" strokeWidth="2" /></Glyph>,
  darkPlus: <Glyph w={8} h={8}><path d="M0 4h8M4 0v8" stroke="#333" strokeWidth="2" /></Glyph>,
  darkMinus: <Glyph w={8} h={8}><path d="M0 4h8" stroke="#333" strokeWidth="2" /></Glyph>,
  clock: <Glyph w={9} h={9}><circle cx="4.500" cy="4.500" r="3" fill="#9cc0ff" stroke="#1540c0" strokeWidth="1.500" /><path d="M4.500 2v3h1.500" stroke="#10308c" fill="none" /></Glyph>,
  star: <Glyph w={9} h={9}><path d="M4.500 0v9M0 4.500h9M1.500 1.500l6 6M7.500 1.500l-6 6" stroke="#1c1c1c" /><circle cx="4.500" cy="4.500" r="1" fill="#bbb" /></Glyph>,
  fader: <Glyph w={5} h={9}><path d="M2.500 0v9" stroke="#555" /><path d="M.500 2.500h4v2h-4z" fill="#bbb" stroke="#555" /></Glyph>,
  clipFader: <Glyph w={10} h={13}><path d="M5 2v10M2.500 5.500h5" stroke="#fff" /><path d="M3.500 3.500h3v4h-3z" fill="#777" stroke="#fff" /></Glyph>,
  metronome: <Glyph w={8} h={10}><path d="M4 2v5" stroke="#555" /><path d="M0 10l3-4h2l3 4z" fill="#555" /></Glyph>,
  folderUp: <Glyph w={10} h={11}><path d="M0 1h10" stroke="#ccc" strokeWidth="2" /><path d="M5 3l5 4H7v4H3V7H0z" fill="#ccc" /></Glyph>,
};

/* ---------- pieces ---------- */

const MAP_CLIPS = [
  [291, 29, 0], [312, 91, 1], [400, 21, 0], [448, 2, 0], [450, 12, 1], [465, 9, 0], [483, 11, 0], [578, 4, 0], [602, 54, 0], [733, 32, 0],
  [822, 17, 0], [960, 51, 0], [1237, 13, 0], [1277, 3, 0], [1279, 26, 1], [1321, 16, 0], [1348, 16, 0], [1372, 9, 0], [1475, 8, 0], [1658, 176, 0],
];
const MAP_WIDTH = 1856;
const VIEW_SHARE = 87.8;
const BARS_VISIBLE = 1909;
const MINUTES_VISIBLE = 64.2;
const bars = Array.from({ length: 15 }, (_, i) => 1 + i * 128);
const minutes = Array.from({ length: 13 }, (_, i) => i * 5);
const pad = n => String(n).padStart(2, '0');

function ToolbarArea() {
  return (
    <Toolbar>
      <Section $w={129} $justify="space-between">
        <Bracket $top />
        <ModeLcd>
          <ModeButton>SHUFFLE</ModeButton>
          <ModeButton>SPOT</ModeButton>
          <ModeButton $on>SLIP</ModeButton>
          <ModeButton>GRID<Down c="#7cc010" /></ModeButton>
        </ModeLcd>
        <Bracket />
      </Section>
      <Section $w={105} $pad="12px 0 0">
        <ButtonRow $h={32}>
          <Key $w={15} $r={2} $joined aria-label="Zoom out">{icons.left}</Key>
          <Key $w={32} $r={0} $joined aria-label="Audio zoom">{icons.waveZoom}</Key>
          <Key $w={32} $r={0} $joined aria-label="MIDI zoom">{icons.midiZoom}</Key>
          <Key $w={15} $r={2} $joined aria-label="Zoom in">{icons.right}</Key>
        </ButtonRow>
        <Rule $w={86} />
        <ButtonRow $h={21}>
          {[1, 2, 3, 4, 5].map(n => <Key key={n} $w={19} $h={21} $r={1} $joined>{n}</Key>)}
        </ButtonRow>
      </Section>
      <Section $w={291} $pad="5px 0 0">
        <ButtonRow $h={39} $align="flex-end">
          <Key $w={38} aria-label="Zoomer">{icons.magnifier}</Key>
          <Raised>
            <Key $w={39} $joined $r={2} aria-label="Trim">{icons.trim}</Key>
            <Key $w={39} $joined $r={0} $on aria-label="Selector">{icons.selector}</Key>
            <Key $w={39} $joined $r={2} aria-label="Grabber">{icons.hand}</Key>
          </Raised>
          <Key $w={38} $joined aria-label="Scrubber">{icons.speaker}</Key>
          <Key $w={38} $joined aria-label="Pencil">{icons.pencil}</Key>
        </ButtonRow>
        <Rule $w={240} />
        <ButtonRow $h={21} $gap={4}>
          {[['zoomToggle'], ['transient', 1], ['mirror'], ['linkAuto', 1], ['linkTrack', 1], ['linkEdit', 1], ['insertion'], ['layered']].map(([name, on]) => (
            <Key key={name} $w={31} $h={21} $r={2} $on={!!on} aria-label={name}>{icons[name]}</Key>
          ))}
        </ButtonRow>
      </Section>
      <Section $w={339} $justify="center">
        <CounterLcd>
          <CounterTop>
            <MainTime>00:00:00:00<Down c="#b0b0b0" /></MainTime>
            <Selection>
              <dt>Start</dt><dd>00:00:00:00</dd>
              <dt>End</dt><dd>00:00:00:00</dd>
              <dt>Length</dt><dd>00:00:00:00</dd>
            </Selection>
          </CounterTop>
          <CounterBottom>
            <White>Cursor</White>
            <CursorTime>00:33:03:05.07</CursorTime>
            <Gain>+7.4 db</Gain>
            <Lamps>
              <Glyph w={16} h={11}><path d="M.500 .500h15v10H.500zM1 5.500h14M3.500 2v7M5.500 3v5M8.500 3v5M11.500 2v7M13.500 4v3" stroke="#98d820" fill="none" /></Glyph>
              <Glyph w={9} h={11}><path d="M3 0h6v11H0V3z" fill="#98d820" /><path d="M0 3h3V0" fill="none" stroke="#2a4a0a" /></Glyph>
              <span>Dly</span>
              <Glyph w={12} h={12}><circle cx="6" cy="6" r="4" fill="none" stroke="#35520f" strokeWidth="2" /><circle cx="6" cy="6" r="1" fill="#48701a" /></Glyph>
              <Lamp>✳</Lamp><Lamp>S</Lamp><Lamp $on>M</Lamp>
            </Lamps>
          </CounterBottom>
        </CounterLcd>
      </Section>
      <Section $w={166} $justify="space-between">
        <Bracket $top />
        <GridLcd>
          <GridRow><GridToggle>Grid</GridToggle><time>00:00:00:01.00</time><Down c="#b0b0b0" w={7} /></GridRow>
          <GridRow><White>Nudge</White><time>00:00:00:01.00</time><Down c="#b0b0b0" w={7} /></GridRow>
        </GridLcd>
        <Bracket />
      </Section>
      <Section $w={171} $align="flex-start" $pad="12px 0 0 11px">
        <ButtonRow $h={32} $gap={4}>
          <Key $w={31} $r={2} aria-label="Online">{icons.online}</Key>
          <Key $w={31} $r={2} aria-label="Stop">{icons.stop}</Key>
          <Key $w={31} $r={2} aria-label="Play">{icons.play}</Key>
          <Key $w={31} $r={2} aria-label="Record">
            <svg width="14" height="14" viewBox="0 0 14 14"><circle cx="7" cy="7" r="6" fill="#8c1c14" /><text x="7" y="10" fontSize="9" fontWeight="bold" fill="#fff" textAnchor="middle">P</text></svg>
          </Key>
          <Leds><Led /><Led $on /></Leds>
        </ButtonRow>
        <Rule $w={135} />
        <ButtonRow $h={21} $gap={4}>
          <Key $w={31} $h={21} $r={2} aria-label="Return to zero">{icons.rtz}</Key>
          <Key $w={31} $h={21} $r={2} aria-label="Rewind">{icons.rewind}</Key>
          <Key $w={31} $h={21} $r={2} aria-label="Fast forward">{icons.forward}</Key>
          <Key $w={31} $h={21} $r={2} aria-label="Go to end">{icons.toEnd}</Key>
        </ButtonRow>
      </Section>
      <Section $w={49} $justify="center"><MeterLcd /></Section>
      <LastSection>
        <CornerButton aria-label="Toolbar menu">
          <svg width="16" height="16" viewBox="0 0 16 16"><circle cx="8" cy="8" r="6.500" fill="#c8c8c8" stroke="#555" /><path d="M4.500 6.500h7L8 10.500z" fill="#333" /></svg>
        </CornerButton>
      </LastSection>
    </Toolbar>
  );
}

const MAP_TRACKS = [
  [14, '#7d0064', '#550040'],
  [20, '#5000a0', '#380070'],
  [26, '#c1c814', '#85850c'],
  [32, '#c05010', '#843408'],
  [38, '#30c810', '#1c8808'],
];

function UniverseArea() {
  return (
    <Universe>
      <UniverseMap>
        <MapFrame $share={VIEW_SHARE} />
        {MAP_CLIPS.map(([x, w, row]) => (
          <MapClip key={`${x}-${row}`} $row={row} style={{ left: `${(x / MAP_WIDTH) * 100}%`, width: `${(w / MAP_WIDTH) * 100}%` }} />
        ))}
        {MAP_TRACKS.map(([y, c, dim]) => <MapTrack key={y} $y={y} $c={c} $dim={dim} $share={VIEW_SHARE} />)}
      </UniverseMap>
      <UniverseScroll>
        <Glyph w={5} h={3}><path d="M0 3h5L2.500 0z" fill="#333" /></Glyph>
        <UniverseKnob />
        <Glyph w={5} h={3}><path d="M0 0h5L2.500 3z" fill="#333" /></Glyph>
      </UniverseScroll>
      <UniverseButtons>
        <button aria-label="Universe view"><Glyph w={13} h={13}><path d="M.500 .500h12v12H.500zM3 3.500h7M3 5.500h3M7 5.500h3M3 7.500h7M3 9.500h3M7 9.500h3" stroke="#aaa" fill="none" /></Glyph></button>
        <button aria-label="MIDI editor"><Glyph w={13} h={13}><path d="M.500 12.500V.500h12v12M3 12l2-1V4h3v7l2 1" stroke="#888" fill="none" /></Glyph></button>
      </UniverseButtons>
    </Universe>
  );
}

function RulerArea() {
  return (
    <Rulers>
      <RulerRow>
        <RulerName>Bars|Beats</RulerName>
        <RulerBody $color="#b8b8b8">
          <Ticks>{bars.map(b => <Tick key={b} style={{ width: `${(12800 / BARS_VISIBLE)}%` }}>{b}</Tick>)}</Ticks>
        </RulerBody>
        <ToTop aria-label="Scroll to top">{icons.folderUp}</ToTop>
      </RulerRow>
      <RulerRow $bg="#757d88">
        <RulerName $lead $bg="#757d88" $color="#fff">
          <RulerLead>
            <Glyph w={15} h={11}><path d="M.500 .500h14v10H.500zM1 3.500h13M1 7.500h13" stroke="#111" fill="none" /></Glyph>
            <Down c="#111" w={6} />
          </RulerLead>
          Timecode
        </RulerName>
        <RulerBody $color="#fff">
          <StartFlag width="12" height="16" viewBox="0 0 12 16">
            <path d="M0 0l7 8-7 8z" fill="#5a9ae0" stroke="#111" />
            <path d="M5 1h6v12L5 7z" fill="#fff" stroke="#111" /><path d="M4 9l5-5" stroke="#111" strokeWidth="2" />
          </StartFlag>
          <Ticks>{minutes.map(m => <Tick key={m} style={{ width: `${(500 / MINUTES_VISIBLE)}%` }}>{`${pad(Math.floor(m / 60))}:${pad(m % 60)}:00:00`}</Tick>)}</Ticks>
        </RulerBody>
      </RulerRow>
      <RulerRow>
        <RulerName $lead><RulerLead $indent><Glyph w={6} h={8}><path d="M0 0l6 4-6 4z" fill="#999" /></Glyph></RulerLead>Tempo{icons.plus}</RulerName>
        <RulerBody $bg="#97ad5f">
          <svg width="13" height="14" viewBox="0 0 13 14"><path d="M0 2l5 5-5 5z" fill="#f01808" /><ellipse cx="9" cy="12" rx="2.500" ry="1.500" fill="#111" /><path d="M11.500 1v11" stroke="#111" /></svg>
          <TempoText>120</TempoText>
        </RulerBody>
      </RulerRow>
      <RulerRow><RulerName>Meter{icons.plus}</RulerName><RulerBody $bg="#6785a7"><MeterText>Default: 4/4</MeterText></RulerBody></RulerRow>
      <RulerRow><RulerName>Markers{icons.plus}</RulerName><RulerBody $bg="#959595" /></RulerRow>
      <Playhead />
    </Rulers>
  );
}

function InsertSlots({ h, label }) {
  return (
    <Slots $h={h}>
      {[label, null, null].map((text, i) => (
        <Slot key={i} $h={h} $on={!!text} aria-label={text || 'Empty insert'}>
          <SlotKey $on={!!text}><Dot /></SlotKey>
          {text && <><SlotText>{text}</SlotText><SlotMeter $c="#4a2808" /></>}
        </Slot>
      ))}
    </Slots>
  );
}

function SendSlots({ h, label }) {
  return (
    <Slots $h={h}>
      {['a', 'b', 'c'].map((key, i) => {
        const text = i === 0 ? label : null;
        return (
          <Slot key={key} $h={h} $on={!!text}>
            <SlotKey $on={!!text}>{key}</SlotKey>
            {text && <><SlotText>{text}</SlotText><SlotMeter $c="#2a3a10" /></>}
          </Slot>
        );
      })}
    </Slots>
  );
}

function Track({ t }) {
  const h = hues[t.hue];
  const isAudio = !!t.clip;
  return (
    <Row>
      <TrackHead $h={h}>
        <ColorStrip $h={h}>
          <button aria-label="Track menu"><svg width="11" height="11" viewBox="0 0 11 11"><circle cx="5.500" cy="5.500" r="4.500" fill="rgba(255,255,255,.35)" stroke="rgba(255,255,255,.3)" /><path d="M3 4.500h5L5.500 7.500z" fill="rgba(0,0,0,.7)" /></svg></button>
          <button aria-label="Expand lanes"><svg width="8" height="9" viewBox="0 0 8 9"><path d="M.500 .500l7 4-7 4z" fill="rgba(255,255,255,.55)" /></svg></button>
        </ColorStrip>
        <Info $h={h}>
          <NameRow>
            <TrackNo>{t.no}</TrackNo>
            <TrackName>{t.name}</TrackName>
            {isAudio && <Playlist $kind={t.playlist} aria-label="Playlists"><Down c="#1c2c40" w={7} /></Playlist>}
          </NameRow>
          <Pads>
            {isAudio ? <Pad $kind="rec" aria-label="Record enable"><Glyph w={10} h={10}><circle cx="5" cy="5" r="4" fill="#dcd4d4" /></Glyph></Pad> : <Pad $kind="blank" aria-label="Unused" />}
            {isAudio ? <Pad $kind={t.monitor ? 'input' : 'grey'}>I</Pad> : <Pad $kind="blank" aria-label="Unused" />}
            <Pad $kind={t.muted ? 'grey' : 'dim'}>S</Pad>
            <Pad $kind={t.muted ? 'mute' : 'grey'}>M</Pad>
          </Pads>
          <Modes>
            <SmallKey aria-label="Timebase">{icons.clock}</SmallKey>
            <SmallKey aria-label="Elastic audio">{icons.star}</SmallKey>
            <SelectWrap>
              <ModeSelect $w={30} $arrow={!isAudio} aria-label={`${t.name} view`}><option>{isAudio ? 'wave' : 'vol'}</option></ModeSelect>
              {!isAudio && <Down c="#555" w={7} />}
            </SelectWrap>
            <SelectWrap>
              <ModeSelect $w={20} $tight={isAudio} $arrow={!isAudio} $color={t.monitor ? '#111' : '#1e6e10'} $flat={t.monitor} aria-label={`${t.name} automation`}><option>{isAudio ? 'read' : 'rd'}</option></ModeSelect>
              {!isAudio && <Down c="#555" w={6} />}
            </SelectWrap>
            <BlankMode>{isAudio && icons.metronome}</BlankMode>
          </Modes>
        </Info>
        <MeterCell>
          <TrackMeter />
          {t.insert && <SideMeter />}
        </MeterCell>
        <InsertSlots h={h} label={t.insert} />
        <InsertSlots h={h} />
        <SendSlots h={h} label={t.send} />
        <IoSlots $h={h}>
          <SelectWrap>
            <IoSelect aria-label={`${t.name} input`}><option>{t.input}</option></IoSelect>
            <Down c="#666" w={7} />
          </SelectWrap>
          <IoOutput>
            <IoSelect aria-label={`${t.name} output`}><option>{t.output}</option></IoSelect>
            <FaderKey aria-label="Output window">{icons.fader}</FaderKey>
          </IoOutput>
          <VolPan><span>0.0</span><span>P</span><span>P</span></VolPan>
        </IoSlots>
      </TrackHead>
      <Scale $clip={isAudio}>
        {(isAudio ? [3, 9, 3, 3, 9] : [9, 7, 6, 5, 3, 2]).map((w, i) => <ScaleMark key={i} $w={w} />)}
      </Scale>
      {isAudio ? (
        <ClipLane>
          <Clip $c={h.clip}>
            <Wave viewBox={`0 0 ${CLIP_WIDTH} 63`} preserveAspectRatio="none">
              <path d={`M0 31.500H${CLIP_WIDTH}`} stroke="rgba(90,60,90,.3)" />
              <path d={`${wavePath(levels[t.wave], 16)}${wavePath(levels[t.wave], 48)}`} fill={h.wave} stroke={h.line} strokeWidth="1" />
            </Wave>
            <ClipName>{t.clip}</ClipName>
            <ClipGain>{icons.clipFader}<span>0 dB</span></ClipGain>
          </Clip>
        </ClipLane>
      ) : (
        <AuxLane>
          <AutoFill $c={h.tint}>
            <AutoPoint width="4" height="5" viewBox="0 0 4 5"><path d="M0 0h2l1.500 2.500L2 5H0z" fill="#fff" stroke="#111" /></AutoPoint>
          </AutoFill>
        </AuxLane>
      )}
    </Row>
  );
}

export default function App() {
  return (
    <>
      <GlobalStyle />
      <TopEdge />
      <ToolbarArea />
      <Workspace>
        <UniverseArea />
        <RulerArea />
        <Body>
          <TrackArea>
            <ColumnHeads>
              <HeadList>
                <HeadTools>
                  <Glyph w={13} h={11}><path d="M.500 .500h12v10H.500zM3.500 0v11M6.500 0v11M9.500 0v11" stroke="#ddd" fill="none" /></Glyph>
                  <Down c="#eee" w={6} />
                  <Glyph w={11} h={11}><circle cx="5.500" cy="5.500" r="4.500" fill="#244a80" stroke="#4a7ab8" /><path d="M5.500 2v4l2 1" stroke="#cde" fill="none" /></Glyph>
                  <Down c="#eee" w={7} />
                </HeadTools>
                <Head>INSERTS A-E</Head>
                <Head>INSERTS F-J</Head>
                <Head>SENDS A-E</Head>
                <Head>I / O</Head>
              </HeadList>
              <HeadLane />
            </ColumnHeads>
            {tracks.map(t => <Track key={t.no} t={t} />)}
            <BottomGap />
          </TrackArea>
          <ScrollColumn>
            <AzKey aria-label="Keyboard focus"><Glyph w={13} h={13}><text x="0" y="6" fontSize="8" fontWeight="bold" fill="#ffc400">a</text><text x="7" y="12" fontSize="9" fontWeight="bold" fill="#ffc400">z</text></Glyph></AzKey>
            <ToolKey $h={20} aria-label="Audio zoom"><Glyph w={10} h={8}><path d="M0 0l4 4-4 4zM4 0l5 4-5 4z" fill="#444" /></Glyph></ToolKey>
            <ToolKey $h={21} aria-label="MIDI zoom"><Glyph w={10} h={7}><path d="M0 0h5v3H0zM4 4h6v3H4z" fill="#333" /></Glyph></ToolKey>
            <ToolKey $h={17} $dark aria-label="Scroll up"><Glyph w={8} h={4}><path d="M0 4h8L4 0z" fill="#eee" /></Glyph></ToolKey>
            <VTrack><VSpace $f={318} /><VThumb /><VSpace $f={34} /></VTrack>
            <ToolKey $dark $h={15} aria-label="Scroll down"><Down c="#eee" /></ToolKey>
            <ToolKey $h={15} aria-label="Zoom out tracks">{icons.darkMinus}</ToolKey>
            <ToolKey $h={15} aria-label="Zoom in tracks">{icons.darkPlus}</ToolKey>
          </ScrollColumn>
        </Body>
        <BottomBar>
          <BottomLeft><Glyph w={10} h={9}><path d="M0 0h1v9H0zM2 3.500h3V1l5 3.500L5 8V5.500H2z" fill="#c4c4c4" /></Glyph></BottomLeft>
          <HScroll>
            <ToolKey $w={16} $dark aria-label="Scroll left"><Glyph w={4} h={8}><path d="M4 0v8L0 4z" fill="#eee" /></Glyph></ToolKey>
            <HTrack><HThumb /></HTrack>
            <ToolKey $w={17} $dark aria-label="Scroll right"><Glyph w={4} h={8}><path d="M0 0v8l4-4z" fill="#eee" /></Glyph></ToolKey>
            <ToolKey $w={15} aria-label="Zoom out">{icons.darkMinus}</ToolKey>
            <ToolKey $w={15} aria-label="Zoom in">{icons.darkPlus}</ToolKey>
          </HScroll>
          <BottomEnd><Glyph w={10} h={9}><path d="M9 0h1v9H9zM8 3.500H5V1L0 4.500 5 8V5.500h3z" fill="#ccc" /></Glyph></BottomEnd>
        </BottomBar>
      </Workspace>
      <DesktopEdge />
    </>
  );
}
